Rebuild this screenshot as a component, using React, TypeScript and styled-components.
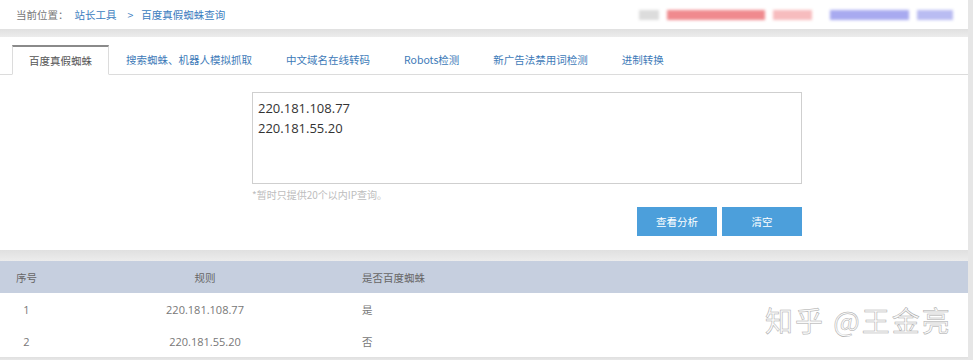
import styled, { createGlobalStyle } from "styled-components"

const GlobalStyle = createGlobalStyle`
	html, body {
		margin: 0;
		padding: 0;
		background: #ffffff;
	}
	body {
		font-family: "Noto Sans CJK SC", "Noto Sans", sans-serif;
		font-size: 10.5px;
		color: #666;
	}
`

const Page = styled.div`
	position: relative;
	width: 968px;
	height: 360px;
	border-right: 5px solid #e6e6e6;
	overflow: hidden;
	display: flex;
	flex-direction: column;
`

const Breadcrumb = styled.div`
	height: 29px;
	flex-shrink: 0;
	display: flex;
	align-items: center;
	padding-left: 16px;
	color: #777;
`

const Crumb = styled.a<{ first?: boolean }>`
	color: #3b7dc0;
	text-decoration: none;
	margin-left: ${(p) => (p.first ? "6px" : "0")};
`

const Arrow = styled.span`
	margin: 0 8px 0 11px;
	color: #3b7dc0;
`

const Masked = styled.div`
	margin-left: auto;
	margin-right: 15px;
	display: flex;
	align-items: center;
	gap: 8px;
	filter: blur(1.8px);
`

const Blot = styled.span<{ w: number; c: string; gapAfter?: number }>`
	display: block;
	width: ${(p) => p.w}px;
	height: 10px;
	background: ${(p) => p.c};
	margin-right: ${(p) => p.gapAfter ?? 0}px;
`

const Band = styled.div<{ h: number }>`
	height: ${(p) => p.h}px;
	flex-shrink: 0;
	background: linear-gradient(#e0e0e0, #ececec);
`

const Tool = styled.div`
	padding-top: 8px;
	height: 205px;
	flex-shrink: 0;
`

const Tabs = styled.div`
	display: flex;
	padding-left: 12px;
	height: 29px;
	border-bottom: 1px solid #dcdcdc;
`

const Tab = styled.div<{ active?: boolean }>`
	display: flex;
	align-items: center;
	padding: 0 17px;
	color: #3d7ab8;
	white-space: nowrap;

	${(p) =>
		p.active &&
		`
		padding: 0 16px;
		color: #555;
		background: #fff;
		border: 1px solid #dcdcdc;
		border-top: 2px solid #8a8a8a;
		border-bottom-color: #fff;
		margin-bottom: -1px;
	`}
`

const Form = styled.div`
	width: 550px;
	margin: 17px 0 0 252px;
	display: flex;
	flex-direction: column;
`

const IpBox = styled.div`
	height: 80px;
	border: 1px solid #cfcfcf;
	padding: 5px 5px;
	font-family: "Open Sans", "Noto Sans", sans-serif;
	font-size: 13px;
	line-height: 20px;
	color: #333;
`

const Hint = styled.div`
	margin-top: 3px;
	font-size: 10px;
	color: #bdbdbd;
`

const Actions = styled.div`
	display: flex;
	justify-content: flex-end;
	gap: 5px;
	margin-top: 5px;
`

const Button = styled.button`
	width: 80px;
	height: 29px;
	border: none;
	background: #4c9fdb;
	color: #fff;
	font-family: "Noto Sans CJK SC", sans-serif;
	font-size: 10.5px;
	padding: 0;
`

const Table = styled.div`
	display: flex;
	flex-direction: column;
	flex: 1;
`

const Row = styled.div<{ head?: boolean }>`
	display: grid;
	grid-template-columns: 53px 304px 1fr;
	align-items: center;
	height: ${(p) => (p.head ? 32 : 32)}px;
	flex-shrink: 0;
	background: ${(p) => (p.head ? "#c6cfdf" : "#fff")};
	color: ${(p) => (p.head ? "#666" : "#777")};
`

const Cell = styled.div<{ left?: boolean }>`
	text-align: ${(p) => (p.left ? "left" : "center")};
	padding-left: ${(p) => (p.left ? "5px" : "0")};
`

const NumCell = styled(Cell)`
	font-family: "Open Sans", "Noto Sans", sans-serif;
	font-size: 11px;
`

const Filler = styled.div`
	flex: 1;
	background: #fff;
`

const Watermark = styled.div`
	position: absolute;
	left: 765px;
	top: 300px;
	font-family: "Noto Sans CJK SC", sans-serif;
	font-size: 28px;
	letter-spacing: 2px;
	color: #fafafa;
	-webkit-text-stroke: 0.5px #aaaaaa;
	white-space: nowrap;
`

const tabs = [
	"百度真假蜘蛛",
	"搜索蜘蛛、机器人模拟抓取",
	"中文域名在线转码",
	"Robots检测",
	"新广告法禁用词检测",
	"进制转换",
]

const results = [
	{ id: 1, ip: "220.181.108.77", real: "是" },
	{ id: 2, ip: "220.181.55.20", real: "否" },
]

const App = () => {
	return (
		<>
			<GlobalStyle />
			<Page>
				<Breadcrumb>
					当前位置：
					<Crumb first href="#">
						站长工具
					</Crumb>
					<Arrow>&gt;</Arrow>
					<Crumb href="#">百度真假蜘蛛查询</Crumb>
					<Masked>
						<Blot w={20} c="#dcdcdc" />
						<Blot w={98} c="#f08a8e" />
						<Blot w={39} c="#f7bcbe" gapAfter={10} />
						<Blot w={79} c="#a8aaf0" />
						<Blot w={36} c="#b9bcf2" />
					</Masked>
				</Breadcrumb>
				<Band h={8} />
				<Tool>
					<Tabs>
						{tabs.map((t, i) => (
							<Tab key={t} active={i === 0}>
								{t}
							</Tab>
						))}
					</Tabs>
					<Form>
						<IpBox>
							220.181.108.77
							<br />
							220.181.55.20
						</IpBox>
						<Hint>*暂时只提供20个以内IP查询。</Hint>
						<Actions>
							<Button>查看分析</Button>
							<Button>清空</Button>
						</Actions>
					</Form>
				</Tool>
				<Band h={11} />
				<Table>
					<Row head>
						<Cell>序号</Cell>
						<Cell>规则</Cell>
						<Cell left>是否百度蜘蛛</Cell>
					</Row>
					{results.map((r) => (
						<Row key={r.id}>
							<NumCell>{r.id}</NumCell>
							<NumCell>{r.ip}</NumCell>
							<Cell left>{r.real}</Cell>
						</Row>
					))}
					<Filler />
				</Table>
				<Band h={5} />
				<Watermark>知乎 @王金亮</Watermark>
			</Page>
		</>
	)
}

export default App
